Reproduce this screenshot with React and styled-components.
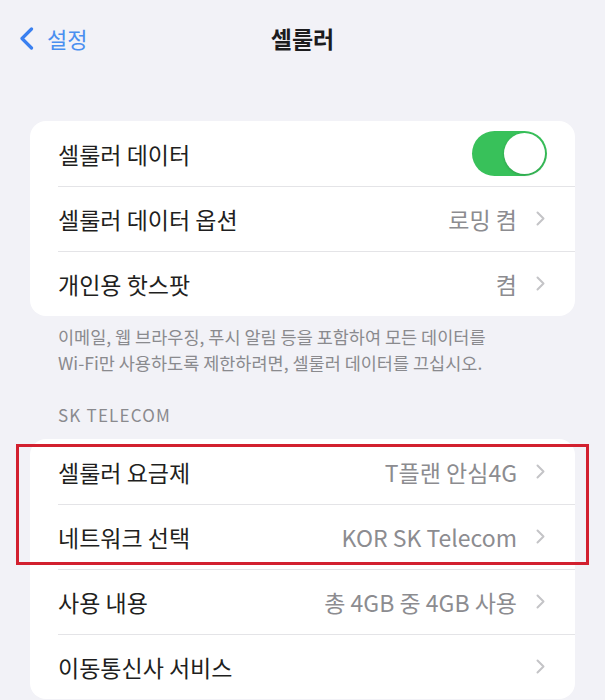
import React from 'react'
import styled, { createGlobalStyle } from 'styled-components'

const GlobalStyle = createGlobalStyle`
  body {
    margin: 0;
    background: #f2f2f7;
    font-family: 'Noto Sans CJK KR', 'Noto Sans', sans-serif;
  }
`

const Screen = styled.div`
  width: 605px;
  height: 700px;
  overflow: hidden;
  background: #f2f2f7;
`

const NavBar = styled.div`
  height: 76px;
  display: grid;
  grid-template-columns: 1fr auto 1fr;
  align-items: center;
`

const BackButton = styled.div`
  display: flex;
  align-items: center;
  gap: 13px;
  padding-left: 19px;
  color: #4a8ff0;
  font-size: 22px;
`

const Title = styled.div`
  font-size: 23px;
  font-weight: 700;
  color: #1c1c1e;
`

const Card = styled.div`
  margin: ${p => p.$top || 0}px 30px 0;
  background: #ffffff;
  border-radius: 16px;
`

const Row = styled.div`
  position: relative;
  height: 65px;
  display: flex;
  align-items: center;
  padding: 0 30px 0 28px;
  font-size: 23px;
  color: #1f1f21;

  ${p => p.$sep && `
    &::before {
      content: '';
      position: absolute;
      top: 0;
      left: 28px;
      right: 0;
      height: 1px;
      background: #e4e4e7;
    }
  `}
`

const Label = styled.span`
  flex: 1;
  white-space: nowrap;
`

const Value = styled.span`
  color: #8c8c90;
  margin-right: 19px;
  white-space: nowrap;
`

const Toggle = styled.div`
  width: 75px;
  height: 45px;
  margin-right: -2px;
  border-radius: 23px;
  background: #38c15a;
  display: flex;
  align-items: center;
  justify-content: flex-end;
  padding: 2px;
  box-sizing: border-box;
`

const Knob = styled.div`
  width: 41px;
  height: 41px;
  border-radius: 50%;
  background: #ffffff;
  box-shadow: 0 1px 3px rgba(0, 0, 0, 0.18);
`

const Footnote = styled.p`
  margin: 8px 0 0;
  padding: 0 20px 0 58px;
  font-size: 17.5px;
  line-height: 25.5px;
  color: #8a8a8e;
  white-space: nowrap;
`

const SectionHeader = styled.div`
  margin-top: 29px;
  padding-left: 58px;
  font-size: 17px;
  line-height: 22px;
  letter-spacing: 1.2px;
  color: #8a8a8e;
`

const Highlight = styled.div`
  position: relative;

  &::after {
    content: '';
    position: absolute;
    top: 5px;
    bottom: 4px;
    left: -14px;
    right: -14px;
    border: 3px solid #d2202f;
    pointer-events: none;
  }
`

const Chevron = () => (
  <svg width="9" height="15" viewBox="0 0 9 15">
    <polyline points="1.5,1.5 7.5,7.5 1.5,13.5" fill="none" stroke="#c4c4c7" strokeWidth="2" strokeLinecap="round" strokeLinejoin="round" />
  </svg>
)

const BackChevron = () => (
  <svg width="15" height="23" viewBox="0 0 15 23">
    <polyline points="12.5,2 3,11.5 12.5,21" fill="none" stroke="#3a80f0" strokeWidth="3.2" strokeLinecap="round" strokeLinejoin="round" />
  </svg>
)

const LinkRow = ({ label, value, sep }) => (
  <Row $sep={sep}>
    <Label>{label}</Label>
    {value && <Value>{value}</Value>}
    <Chevron />
  </Row>
)

const App = () => {
  return (
    <Screen>
      <GlobalStyle />
      <NavBar>
        <BackButton>
          <BackChevron />
          <span>설정</span>
        </BackButton>
        <Title>셀룰러</Title>
        <div />
      </NavBar>

      <Card $top={45}>
        <Row>
          <Label>셀룰러 데이터</Label>
          <Toggle><Knob /></Toggle>
        </Row>
        <LinkRow sep label="셀룰러 데이터 옵션" value="로밍 켬" />
        <LinkRow sep label="개인용 핫스팟" value="켬" />
      </Card>

      <Footnote>
        이메일, 웹 브라우징, 푸시 알림 등을 포함하여 모든 데이터를
        <br />
        Wi-Fi만 사용하도록 제한하려면, 셀룰러 데이터를 끄십시오.
      </Footnote>

      <SectionHeader>SK TELECOM</SectionHeader>

      <Card $top={13}>
        <Highlight>
          <LinkRow label="셀룰러 요금제" value="T플랜 안심4G" />
          <LinkRow sep label="네트워크 선택" value="KOR SK Telecom" />
        </Highlight>
        <LinkRow sep label="사용 내용" value="총 4GB 중 4GB 사용" />
        <LinkRow sep label="이동통신사 서비스" />
      </Card>
    </Screen>
  )
}

export default App
